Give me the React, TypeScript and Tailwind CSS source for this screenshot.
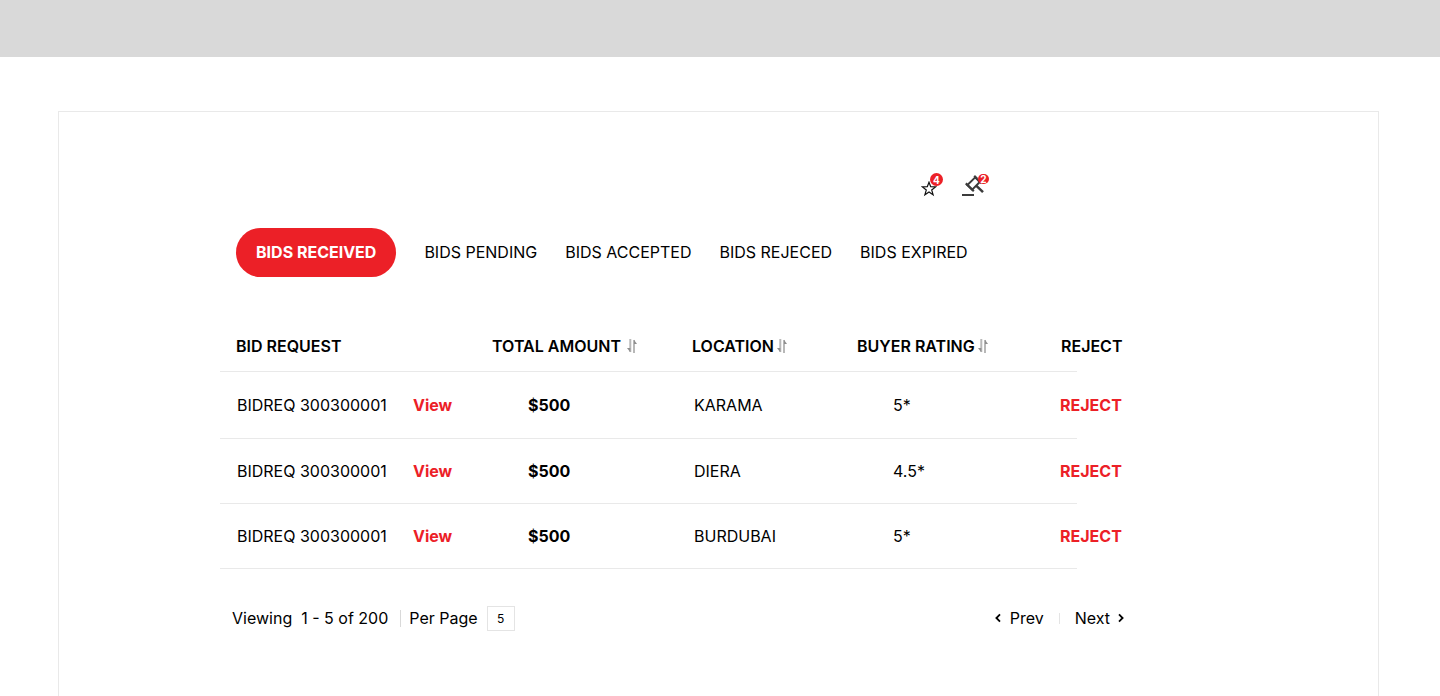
import { useState } from "react";

type Bid = { id: string; amount: string; location: string; rating: string };

const TABS = ["BIDS RECEIVED", "BIDS PENDING", "BIDS ACCEPTED", "BIDS REJECED", "BIDS EXPIRED"];

const BIDS: Bid[] = [
  { id: "BIDREQ 300300001", amount: "$500", location: "KARAMA", rating: "5*" },
  { id: "BIDREQ 300300001", amount: "$500", location: "DIERA", rating: "4.5*" },
  { id: "BIDREQ 300300001", amount: "$500", location: "BURDUBAI", rating: "5*" },
];

function StarIcon() {
  return (
    <svg width="16" height="16" viewBox="0 0 16 16" fill="none" stroke="#111" strokeWidth="1.2" aria-hidden="true">
      <path d="M8 1.2 9.7 5.7 14.6 5.9 10.7 8.9 12.1 13.7 8 10.9 3.9 13.7 5.3 8.9 1.4 5.9 6.3 5.7Z" />
    </svg>
  );
}

function GavelIcon() {
  return (
    <svg width="24" height="24" viewBox="0 0 24 24" fill="none" stroke="#3c3c3c" aria-hidden="true">
      <path d="M0 22H12" strokeWidth="2" />
      <path d="M13.2 4.4 5.4 12 10.2 16.6 17.8 9Z" strokeWidth="2" />
      <path d="M12.2 2.9 15.2 5.9M3.8 10.4 11.8 18.2M16.4 7.2 19.4 10.2" strokeWidth="2.2" />
      <path d="M14.2 12.6 21 19.2" strokeWidth="2.5" />
    </svg>
  );
}

function SortIcon() {
  return (
    <svg width="10" height="14" viewBox="0 0 10 14" fill="none" aria-hidden="true">
      <path d="M3.3 0V13" stroke="#b8b8b8" strokeWidth="2" />
      <path d="M0 9H3.3V13.2Z" fill="#8f8f8f" />
      <path d="M7 1V14" stroke="#b8b8b8" strokeWidth="2" />
      <path d="M10 5H7V.8Z" fill="#8f8f8f" />
    </svg>
  );
}

function Chevron({ flip = false }: { flip?: boolean }) {
  return (
    <svg width="6" height="10" viewBox="0 0 6 10" fill="none" stroke="#000" strokeWidth="1.8" aria-hidden="true">
      <path d={flip ? "M1 1.4 4.6 5 1 8.6" : "M5 1.4 1.4 5 5 8.6"} />
    </svg>
  );
}

function SortHeader({ label, wide = false }: { label: string; wide?: boolean }) {
  return (
    <button type="button" className={`flex items-center font-semibold whitespace-nowrap ${wide ? "gap-1.5" : "gap-[3px]"}`}>
      {label}
      <SortIcon />
    </button>
  );
}

export default function App() {
  const [active, setActive] = useState(TABS[0]);
  const [perPage, setPerPage] = useState("5");

  return (
    <div className="flex min-h-screen flex-col bg-white font-['Inter',sans-serif] text-base text-black">
      <header className="h-[57px] bg-[#d9d9d9]" />
      <main className="mt-[54px] mr-[61px] ml-[58px] flex-1 border border-b-0 border-[#e9e9e9] pl-[161px]">
        <div className="w-full max-w-[904px]">
          <div className="flex justify-end gap-[25px] pt-[61px] pr-[138px]">
            <button type="button" aria-label="Starred bids" className="relative flex h-6 w-4 items-end">
              <StarIcon />
              <span className="absolute top-0 left-[9px] flex size-[13px] items-center justify-center rounded-full bg-[#ec2027] text-[10px] leading-none font-bold text-white">
                4
              </span>
            </button>
            <button type="button" aria-label="Live bids" className="relative flex h-6 w-6 items-end">
              <GavelIcon />
              <span className="absolute top-px left-4 flex h-[10px] w-[11px] items-center justify-center rounded-full bg-[#ec2027] text-[10px] leading-none font-bold text-white">
                2
              </span>
            </button>
          </div>

          <nav className="mt-[31px] flex gap-7 pl-4">
            {TABS.map((tab) => (
              <button
                key={tab}
                type="button"
                onClick={() => setActive(tab)}
                className={
                  tab === active
                    ? "h-[49px] rounded-full bg-[#ec2027] px-5 pb-0.5 font-bold whitespace-nowrap text-white"
                    : "h-[49px] pb-0.5 whitespace-nowrap"
                }
              >
                {tab}
              </button>
            ))}
          </nav>

          <table className="mt-11 w-[857px] table-fixed border-collapse text-left">
            <colgroup>
              <col className="w-[193px]" />
              <col className="w-[79px]" />
              <col className="w-[200px]" />
              <col className="w-[165px]" />
              <col className="w-[203px]" />
              <col className="w-[17px]" />
            </colgroup>
            <thead>
              <tr className="h-[50px] border-b border-[#e9e9e9]">
                <th className="pl-4 font-semibold" colSpan={2}>BID REQUEST</th>
                <th><SortHeader label="TOTAL AMOUNT" wide /></th>
                <th><SortHeader label="LOCATION" /></th>
                <th><SortHeader label="BUYER RATING" /></th>
                <th className="pl-px font-semibold">REJECT</th>
              </tr>
            </thead>
            <tbody>
              {BIDS.map((bid, i) => (
                <tr key={i} className="h-[65px] border-b border-[#e9e9e9] first:h-[67px]">
                  <td className="pl-[17px] whitespace-nowrap">{bid.id}</td>
                  <td><a href="#view" className="font-bold text-[#ec2027]">View</a></td>
                  <td className="pl-9 font-bold">{bid.amount}</td>
                  <td className="pl-0.5">{bid.location}</td>
                  <td className="pl-9">{bid.rating}</td>
                  <td><button type="button" className="font-bold text-[#ec2027]">REJECT</button></td>
                </tr>
              ))}
            </tbody>
          </table>

          <div className="mt-[37px] flex items-center justify-between pl-3">
            <div className="flex items-center">
              <span className="whitespace-pre">Viewing  1 - 5 of 200</span>
              <span className="mr-2 ml-3 h-[17px] w-px bg-[#d9d9d9]" />
              <label htmlFor="per-page">Per Page</label>
              <input
                id="per-page"
                value={perPage}
                onChange={(e) => setPerPage(e.target.value)}
                className="ml-[9px] h-[25px] w-7 border border-[#e4e4e4] text-center text-xs"
              />
            </div>
            <div className="flex items-center">
              <button type="button" className="flex items-center gap-[9px]">
                <Chevron />
                Prev
              </button>
              <span className="mx-[15px] h-[11px] w-px bg-[#e4e4e4]" />
              <button type="button" className="flex items-center gap-2">
                Next
                <Chevron flip />
              </button>
            </div>
          </div>
        </div>
      </main>
    </div>
  );
}
